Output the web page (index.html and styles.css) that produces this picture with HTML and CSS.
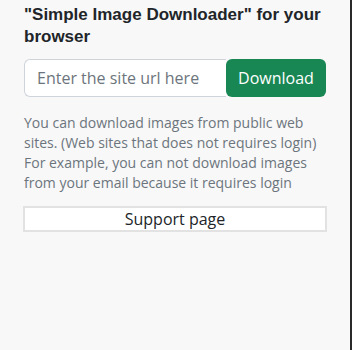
FILE: index.html
```html
<!DOCTYPE html>
<html>
<head>
<meta charset="utf-8">
<link rel="stylesheet" href="styles.css">
</head>
<body>
<div class="frame">
  <main class="popup">
    <h1 class="title">"Simple Image Downloader" for your browser</h1>
    <div class="input-group">
      <input class="url-input" type="text" placeholder="Enter the site url here">
      <button class="btn-download">Download</button>
    </div>
    <p class="note">You can download images from public web sites. (Web sites that does not requires login) For example, you can not download images from your email because it requires login</p>
    <button class="btn-support">Support page</button>
  </main>
  <div class="edge"></div>
</div>
</body>
</html>
```
FILE: styles.css
```css
html, body {
  margin: 0;
  padding: 0;
  height: 100%;
}
body {
  background: #f8f8f8;
  font-family: "Open Sans", "Noto Sans", sans-serif;
  color: #212529;
}
.frame {
  display: flex;
  height: 100%;
}
.popup {
  width: 302px;
  flex: none;
  padding: 0 24px;
}
.edge {
  margin-left: auto;
  width: 2px;
  background: #2a2a2a;
}
.title {
  font-family: "Liberation Sans", Arial, sans-serif;
  font-weight: 700;
  font-size: 17px;
  line-height: 22px;
  margin: 4px 0 0 0;
  color: #212529;
}
.input-group {
  display: flex;
  margin-top: 11px;
  height: 38px;
}
.url-input {
  flex: 1;
  min-width: 0;
  width: 0;
  box-sizing: border-box;
  border: 1px solid #ced4da;
  border-right: none;
  border-radius: 6px 0 0 6px;
  background: #fff;
  padding: 6px 12px;
  font-family: "Open Sans", sans-serif;
  font-size: 16px;
  color: #212529;
  outline: none;
}
.url-input::placeholder {
  color: #6c757d;
}
.btn-download {
  flex: none;
  width: 100px;
  border: none;
  border-radius: 6px;
  background: #198754;
  color: #fff;
  font-family: "Open Sans", sans-serif;
  font-size: 16px;
  padding: 0;
}
.note {
  margin: 16px 0 0 0;
  font-size: 14px;
  line-height: 20px;
  color: #6c757d;
}
.btn-support {
  display: block;
  width: 304px;
  height: 26px;
  margin: 13px 0 0 -1px;
  box-sizing: border-box;
  background: #fff;
  border: 2px solid #e2e2e2;
  font-family: "Open Sans", sans-serif;
  font-size: 16px;
  color: #212529;
  padding: 0;
}
```
